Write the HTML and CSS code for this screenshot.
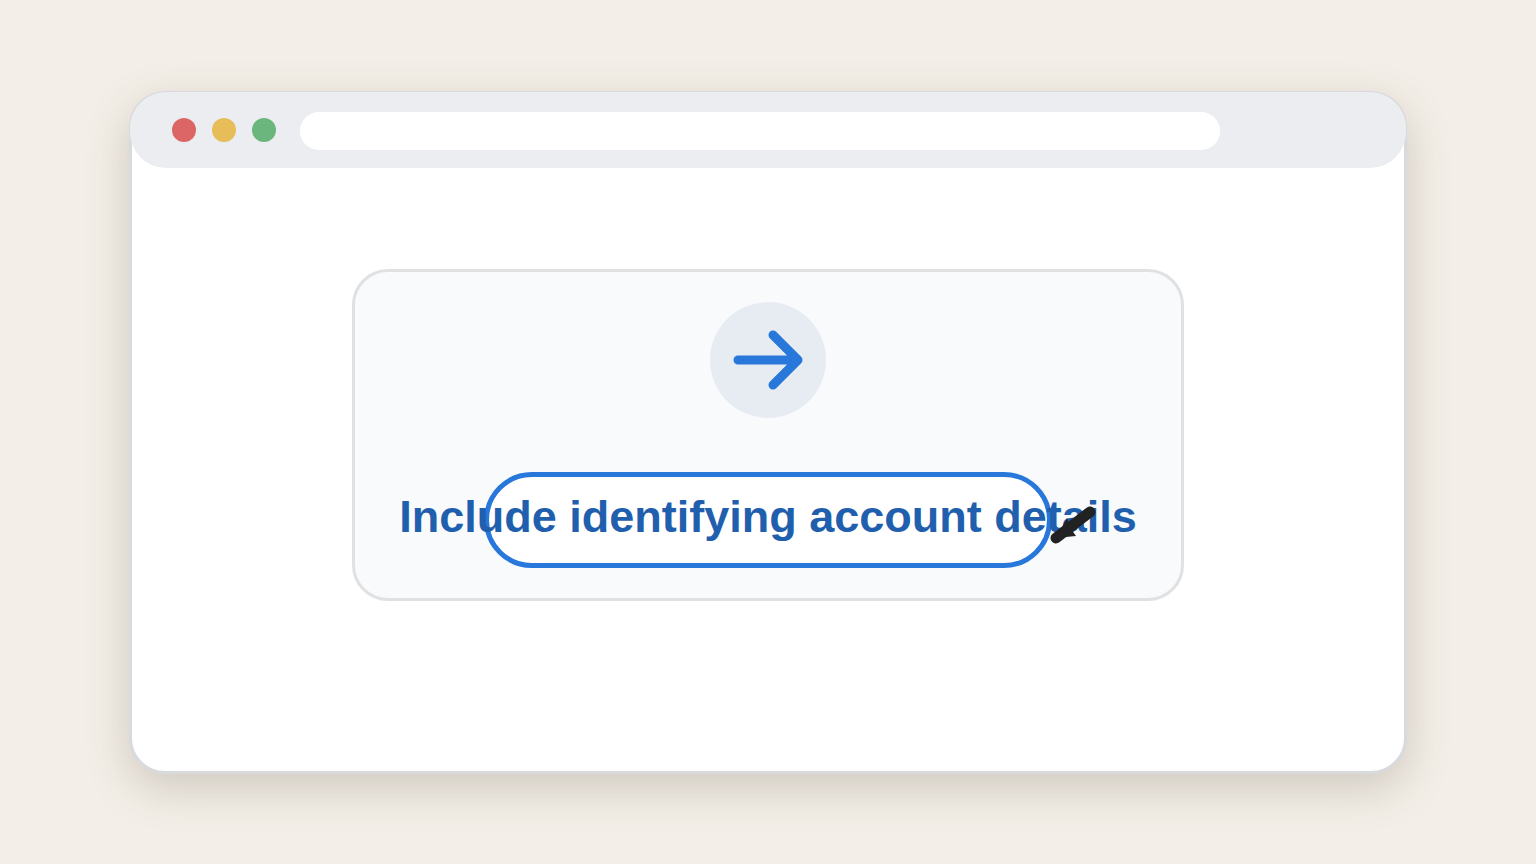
FILE: index.html
```html
<!DOCTYPE html>
<html lang="en">
<head>
    <meta charset="UTF-8">
    <meta name="viewport" content="width=device-width, initial-scale=1.0">
    <title>Account details</title>
    <link rel="stylesheet" href="styles.css">
</head>
<body>
    <div class="window">
        <header class="toolbar">
            <div class="dots">
                <span class="dot red"></span>
                <span class="dot yellow"></span>
                <span class="dot green"></span>
            </div>
            <input class="address" type="text" aria-label="Address">
        </header>
        <main class="content">
            <section class="card">
                <div class="badge">
                    <svg width="116" height="116" viewBox="0 0 116 116" aria-hidden="true">
                        <path d="M28 58H88M63 33L88 58L63 83" />
                    </svg>
                </div>
                <div class="action">
                    <button class="pill" type="button">Include identifying account details</button>
                    <!-- pointer -->
                    <svg class="pointer" width="56" height="48" viewBox="0 0 56 48" aria-hidden="true">
                        <path class="line" d="M12 38L46 12" />
                        <path class="head" d="M12 38L23 18L27 29L32 36Z" />
                    </svg>
                </div>
            </section>
        </main>
    </div>
</body>
</html>
```
FILE: styles.css
```css
* {
    box-sizing: border-box;
}

body {
    margin: 0;
    min-height: 100vh;
    padding: 91px 129px 90px;
    display: flex;
    background-color: #f3eee7;
    font-family: "Liberation Sans", Arial, sans-serif;
}

.window {
    flex: 1;
    min-width: 0;
    background-color: #fff;
    border: 3px solid #d8dade;
    border-radius: 36px;
    box-shadow: 0 14px 44px rgba(80, 75, 50, 0.22);
}

/* Top bar, sits over the window border */
.toolbar {
    display: flex;
    align-items: flex-start;
    gap: 24px;
    height: 76px;
    margin: -2px -2px 0;
    padding: 20px 42px 0;
    background-color: #ebedf1;
    border-radius: 36px;
}

.dots {
    display: flex;
    align-items: center;
    gap: 16px;
    height: 36px;
}

.dot {
    width: 24px;
    height: 24px;
    border-radius: 50%;
}

.red {
    background-color: #dc6665;
}

.yellow {
    background-color: #e6bd58;
}

.green {
    background-color: #6ab67c;
}

.address {
    flex: 0 1 920px;
    min-width: 0;
    height: 38px;
    padding: 0 20px;
    border: none;
    border-radius: 19px;
    background-color: #fff;
}

.content {
    display: flex;
    justify-content: center;
    padding: 101px 24px 24px;
}

.card {
    display: flex;
    flex-direction: column;
    align-items: center;
    gap: 54px;
    flex: 0 1 832px;
    padding: 30px;
    background-color: #f8fafc;
    border: 3px solid #e0e1e3;
    border-radius: 36px;
}

.badge {
    width: 116px;
    height: 116px;
    border-radius: 50%;
    background-color: #e7ecf3;
}

.badge path {
    fill: none;
    stroke: #2877da;
    stroke-width: 9;
    stroke-linecap: round;
    stroke-linejoin: round;
}

.action {
    position: relative;
    width: 568px;
    max-width: 100%;
}

/* The label is wider than the pill and runs out of both ends */
.pill {
    display: flex;
    align-items: center;
    justify-content: center;
    width: 100%;
    height: 96px;
    padding: 0 0 6px;
    background-color: #fff;
    border: 5px solid #2877da;
    border-radius: 48px;
    color: #1f5fae;
    font-family: inherit;
    font-size: 45px;
    font-weight: bold;
    white-space: nowrap;
}

.pointer {
    position: absolute;
    top: 28px;
    right: -48px;
}

.pointer .line {
    fill: none;
    stroke: #222;
    stroke-width: 11;
    stroke-linecap: round;
}

.pointer .head {
    fill: #222;
}
```
